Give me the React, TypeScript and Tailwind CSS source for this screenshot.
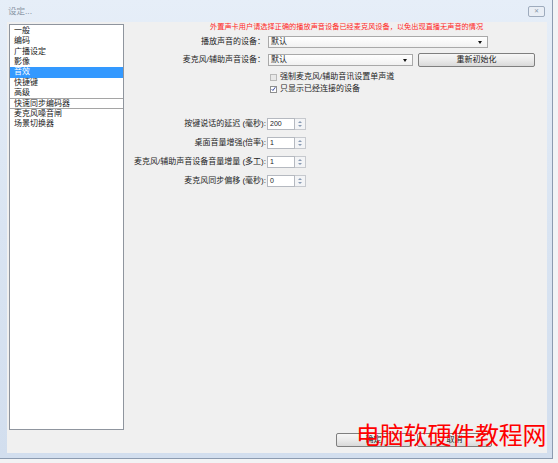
import React from 'react'

const font = "font-['Liberation_Sans','Noto_Sans_CJK_SC',sans-serif]"

const items = ['一般', '编码', '广播设定', '影像', '音效', '快捷键', '高级', '快速同步编码器', '麦克风噪音闸', '场景切换器']

const Arrow = () => (
  <span className="w-0 h-0 border-l-[2.5px] border-r-[2.5px] border-t-[3px] border-l-transparent border-r-transparent border-t-[#111]" />
)

const Combo = ({ width }: { width: string }) => (
  <div className={`${width} h-[12px] border border-[#a9a9a9] bg-gradient-to-b from-white to-[#f1f1f1] flex items-center justify-between pl-[2px] pr-[5px]`}>
    <span className="text-[8px] leading-[10px] text-[#1a1a1a]">默认</span>
    <Arrow />
  </div>
)

const Spin = ({ label, value }: { label: string; value: string }) => (
  <div className="h-[12px] flex items-center">
    <div className="w-[142px] text-right text-[8px] leading-[12px] text-[#1e1e1e] whitespace-nowrap">{label}</div>
    <div className="ml-[1px] w-[28px] h-[12px] border border-[#b5b9c0] bg-white text-[7px] leading-[10px] pl-[2px] text-[#1a1a1a]">{value}</div>
    <div className="w-[11px] h-[12px] border-y border-r border-[#c6c9ce] bg-[#f3f4f6] flex flex-col items-center justify-center gap-[2px]">
      <span className="w-0 h-0 border-l-[2px] border-r-[2px] border-b-[2px] border-l-transparent border-r-transparent border-b-[#8a9bb4]" />
      <span className="w-0 h-0 border-l-[2px] border-r-[2px] border-t-[2px] border-l-transparent border-r-transparent border-t-[#8a9bb4]" />
    </div>
  </div>
)

const Button = ({ label, width }: { label: string; width: string }) => (
  <div className={`${width} h-[14px] border border-[#7f7f7f] rounded-[2px] bg-gradient-to-b from-[#f7f7f7] via-[#ebebeb] to-[#d9d9d9] flex items-center justify-center text-[8px] text-[#1a1a1a]`}>
    {label}
  </div>
)

export default function App() {
  return (
    <div className={`relative w-[558px] h-[463px] overflow-hidden bg-[#f2f3f5] ${font}`}>
      <div className="w-[553px] h-[459px] border-r border-b border-[#8c9bb0] bg-gradient-to-b from-[#e6eef8] via-[#d9e4f2] to-[#d2deee] flex flex-col">
        <div className="h-[22px] flex items-center justify-between pl-[8px] pr-[7px]">
          <span className="text-[8.5px] text-[#8b97a6]">设定...</span>
          <div className="w-[17px] h-[11px] border border-[#9eabbd] rounded-[2px] bg-[#e9eef5] flex items-center justify-center text-[6px] leading-none text-[#8795a8]">✕</div>
        </div>
        <div className="pl-[7px]">
          <div className="w-[540px] h-[431px] bg-[#f0f0f0] flex">
            <div className="mt-[2px] ml-[2px] w-[115px] h-[406px] border border-[#8f959e] bg-white pt-[1px]">
              {items.map((it, i) => (
                <div
                  key={it}
                  className={`h-[10.33px] leading-[10.33px] text-[8px] pl-[4px] whitespace-nowrap ${
                    i === 4 ? 'bg-[#3399ff] text-white' : 'text-[#1a1a1a]'
                  } ${i === 7 ? 'border-y border-[#a5a5a5] leading-[8.33px]' : ''}`}
                >
                  {it}
                </div>
              ))}
            </div>

            <div className="flex-1 flex flex-col">
              <div className="h-[10px] pl-[86px] text-[7.2px] leading-[10px] text-[#ff2626] whitespace-nowrap">
                外置声卡用户请选择正确的播放声音设备已经麦克风设备，以免出现直播无声音的情况
              </div>

              <div className="mt-[4px] h-[12px] flex items-center">
                <div className="w-[141px] text-right text-[8px] text-[#1e1e1e] whitespace-nowrap">播放声音的设备：</div>
                <div className="ml-[3px]"><Combo width="w-[220px]" /></div>
              </div>

              <div className="mt-[5px] h-[14px] flex items-center">
                <div className="w-[141px] text-right text-[8px] text-[#1e1e1e] whitespace-nowrap">麦克风/辅助声音设备：</div>
                <div className="ml-[3px]"><Combo width="w-[145px]" /></div>
                <div className="ml-[5px]"><Button label="重新初始化" width="w-[117px]" /></div>
              </div>

              <div className="mt-[5px] h-[10px] pl-[146px] flex items-center gap-[3px]">
                <div className="w-[7px] h-[7px] border border-[#b9b9b9] bg-[#e8e8e8]" />
                <span className="text-[8px] text-[#1e1e1e] whitespace-nowrap">强制麦克风/辅助音讯设置单声道</span>
              </div>
              <div className="mt-[2px] h-[10px] pl-[146px] flex items-center gap-[3px]">
                <div className="w-[7px] h-[7px] border border-[#8e8f8f] bg-white flex items-center justify-center">
                  <svg width="6" height="6" viewBox="0 0 6 6">
                    <path d="M0.8 3.2 L2.3 4.8 L5.2 0.8" fill="none" stroke="#2b3f9a" strokeWidth="1.1" />
                  </svg>
                </div>
                <span className="text-[8px] text-[#1e1e1e] whitespace-nowrap">只显示已经连接的设备</span>
              </div>

              <div className="mt-[24px] flex flex-col gap-[7px]">
                <Spin label="按键说话的延迟 (毫秒):" value="200" />
                <Spin label="桌面音量增强(倍率):" value="1" />
                <Spin label="麦克风/辅助声音设备音量增量 (多工):" value="1" />
                <Spin label="麦克风同步偏移 (毫秒):" value="0" />
              </div>

              <div className="mt-auto mb-[6px] pl-[212px] flex gap-[6px]">
                <Button label="确定" width="w-[75px]" />
                <Button label="取消" width="w-[75px]" />
              </div>
            </div>
          </div>
        </div>
      </div>

      <div className="absolute left-[356px] top-[419px] text-[24px] leading-[30px] tracking-[-0.2px] text-[#ff0000] font-['Noto_Sans_CJK_SC',sans-serif] whitespace-nowrap">
        电脑软硬件教程网
      </div>
    </div>
  )
}
